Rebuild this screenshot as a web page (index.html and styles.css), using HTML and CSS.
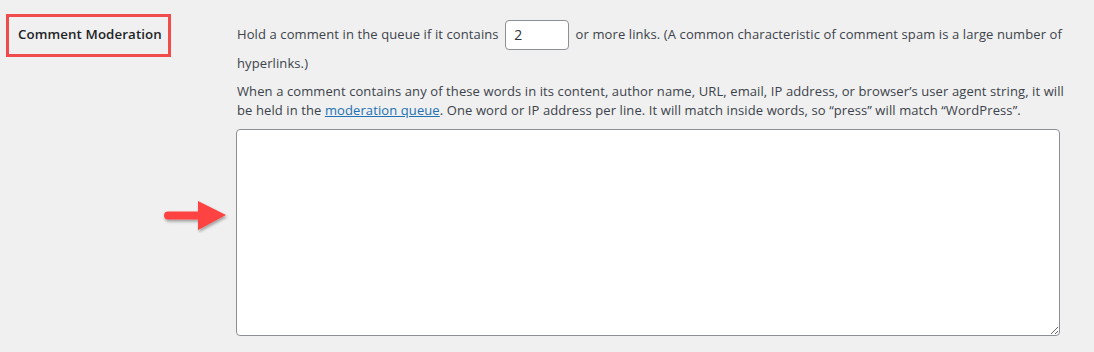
FILE: index.html
```html
<!DOCTYPE html>
<html lang="en">
<head>
  <meta charset="UTF-8">
  <title>Discussion Settings</title>
  <link rel="stylesheet" href="styles.css">
</head>
<body>
  <div class="setting-row">
    <div class="setting-label">
      <span class="label-box">Comment Moderation</span>
      <svg class="arrow" width="70" height="36" viewBox="0 0 70 36">
        <defs>
          <filter id="shadow" x="-20%" y="-40%" width="140%" height="180%">
            <feDropShadow dx="1" dy="2" stdDeviation="1.5" flood-color="#000" flood-opacity="0.35"/>
          </filter>
        </defs>
        <path filter="url(#shadow)" fill="#ff4242" d="M6 14.5 H36 V4 L64 18 L36 33 V22.5 H6 a4 4 0 0 1 0 -8 Z"/>
      </svg>
    </div>
    <div class="setting-field">
      <p class="links-line">Hold a comment in the queue if it contains <input class="small-input" type="text" value="2"> or more links. (A common characteristic of comment spam is a large number of hyperlinks.)</p>
      <p class="description">When a comment contains any of these words in its content, author name, URL, email, IP address, or browser’s user agent string, it will be held in the <a href="#">moderation queue</a>. One word or IP address per line. It will match inside words, so “press” will match “WordPress”.</p>
      <textarea class="moderation-keys"></textarea>
    </div>
  </div>
</body>
</html>
```

FILE: styles.css
```css
* {
  box-sizing: border-box;
}

body {
  margin: 0;
  background: #f0f0f1;
  font-family: "Open Sans", sans-serif;
  font-size: 13px;
  letter-spacing: 0.1px;
  color: #3c434a;
}

.setting-row {
  display: flex;
  padding: 14px 0 0 6px;
}

.setting-label {
  width: 231px;
  position: relative;
}

.label-box {
  display: inline-block;
  border: 3px solid #f24b4b;
  padding: 8px 0 10px 9px;
  width: 165px;
  height: 43px;
  white-space: nowrap;
  font-weight: 600;
  font-size: 13.3px;
  color: #1d2327;
}

.arrow {
  position: absolute;
  left: 156px;
  top: 183px;
}

.setting-field {
  width: 830px;
}

.links-line {
  margin: 7px 0 0 0;
  line-height: 26px;
}

.small-input {
  width: 64px;
  height: 30px;
  border: 1px solid #8c8f94;
  border-radius: 4px;
  padding: 0 8px;
  font-family: inherit;
  font-size: 14px;
  color: #2c3338;
  vertical-align: middle;
  margin: -2px 3px 0 3px;
}

.description {
  margin: 6px 0 9px 0;
  line-height: 19px;
}

.description a {
  color: #2271b1;
}

.moderation-keys {
  display: block;
  width: 824px;
  height: 207px;
  margin-left: -1px;
  border: 1px solid #8c8f94;
  border-radius: 4px;
  background: #fff;
}
```
